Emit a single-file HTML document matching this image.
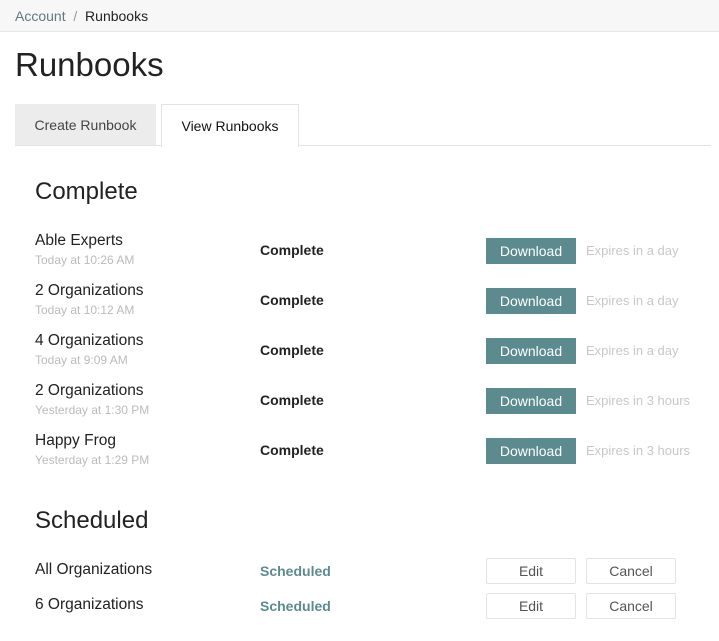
<!DOCTYPE html><html><head><style>
body{margin:0;width:719px;height:641px;overflow:hidden;background:#fff;font-family:"Liberation Sans",sans-serif;color:#222;position:relative}
.a{position:absolute;white-space:nowrap}
.bc{left:0;top:0;width:719px;height:31px;background:#f7f7f7;border-bottom:1px solid #e6e6e6}
.nm{font-size:15.5px;color:#222}
.sub{font-size:12px;color:#bbb}
.st{font-size:14px;font-weight:bold;color:#222}
.dl{width:90px;height:26px;background:#5b8b8f;color:#fff;font-size:14px;text-align:center;line-height:26px}
.ex{font-size:13px;color:#c8c8c8}
.ob{width:88px;height:24px;border:1px solid #e3e3e3;border-radius:2px;color:#555;font-size:14px;text-align:center;line-height:24px}
</style></head><body>
<div class="a bc"></div>
<div class="a" style="left:15px;top:8px;font-size:14px;color:#5f7a80">Account <span style="color:#999">&nbsp;/&nbsp;</span> <span style="color:#222">Runbooks</span></div>
<div class="a" style="left:15px;top:46px;font-size:33px;color:#222">Runbooks</div>
<div class="a" style="left:15px;top:104px;width:141px;height:41px;background:#ececec;font-size:14px;color:#444;text-align:center;line-height:42px">Create Runbook</div>
<div class="a" style="left:161px;top:104px;width:136px;height:42px;border:1px solid #e3e3e3;border-bottom:none;background:#fff;font-size:14px;color:#111;text-align:center;line-height:42px;z-index:2">View Runbooks</div>
<div class="a" style="left:15px;top:145px;width:696px;height:1px;background:#e3e3e3"></div>
<div class="a" style="left:35px;top:178px;font-size:24px;color:#222">Complete</div>

<div class="a nm" style="left:35px;top:232px">Able Experts</div><div class="a sub" style="left:35px;top:253px">Today at 10:26 AM</div>
<div class="a st" style="left:260px;top:242px">Complete</div><div class="a dl" style="left:486px;top:238px">Download</div><div class="a ex" style="left:586px;top:243px">Expires in a day</div>

<div class="a nm" style="left:35px;top:282px">2 Organizations</div><div class="a sub" style="left:35px;top:303px">Today at 10:12 AM</div>
<div class="a st" style="left:260px;top:292px">Complete</div><div class="a dl" style="left:486px;top:288px">Download</div><div class="a ex" style="left:586px;top:293px">Expires in a day</div>

<div class="a nm" style="left:35px;top:332px">4 Organizations</div><div class="a sub" style="left:35px;top:353px">Today at 9:09 AM</div>
<div class="a st" style="left:260px;top:342px">Complete</div><div class="a dl" style="left:486px;top:338px">Download</div><div class="a ex" style="left:586px;top:343px">Expires in a day</div>

<div class="a nm" style="left:35px;top:382px">2 Organizations</div><div class="a sub" style="left:35px;top:403px">Yesterday at 1:30 PM</div>
<div class="a st" style="left:260px;top:392px">Complete</div><div class="a dl" style="left:486px;top:388px">Download</div><div class="a ex" style="left:586px;top:393px">Expires in 3 hours</div>

<div class="a nm" style="left:35px;top:432px">Happy Frog</div><div class="a sub" style="left:35px;top:453px">Yesterday at 1:29 PM</div>
<div class="a st" style="left:260px;top:442px">Complete</div><div class="a dl" style="left:486px;top:438px">Download</div><div class="a ex" style="left:586px;top:443px">Expires in 3 hours</div>

<div class="a" style="left:35px;top:507px;font-size:24px;color:#222">Scheduled</div>
<div class="a nm" style="left:35px;top:561px">All Organizations</div>
<div class="a st" style="left:260px;top:563px;color:#5b8b8f">Scheduled</div>
<div class="a ob" style="left:486px;top:558px">Edit</div><div class="a ob" style="left:586px;top:558px">Cancel</div>
<div class="a nm" style="left:35px;top:596px">6 Organizations</div>
<div class="a st" style="left:260px;top:598px;color:#5b8b8f">Scheduled</div>
<div class="a ob" style="left:486px;top:593px">Edit</div><div class="a ob" style="left:586px;top:593px">Cancel</div>
</body></html>
